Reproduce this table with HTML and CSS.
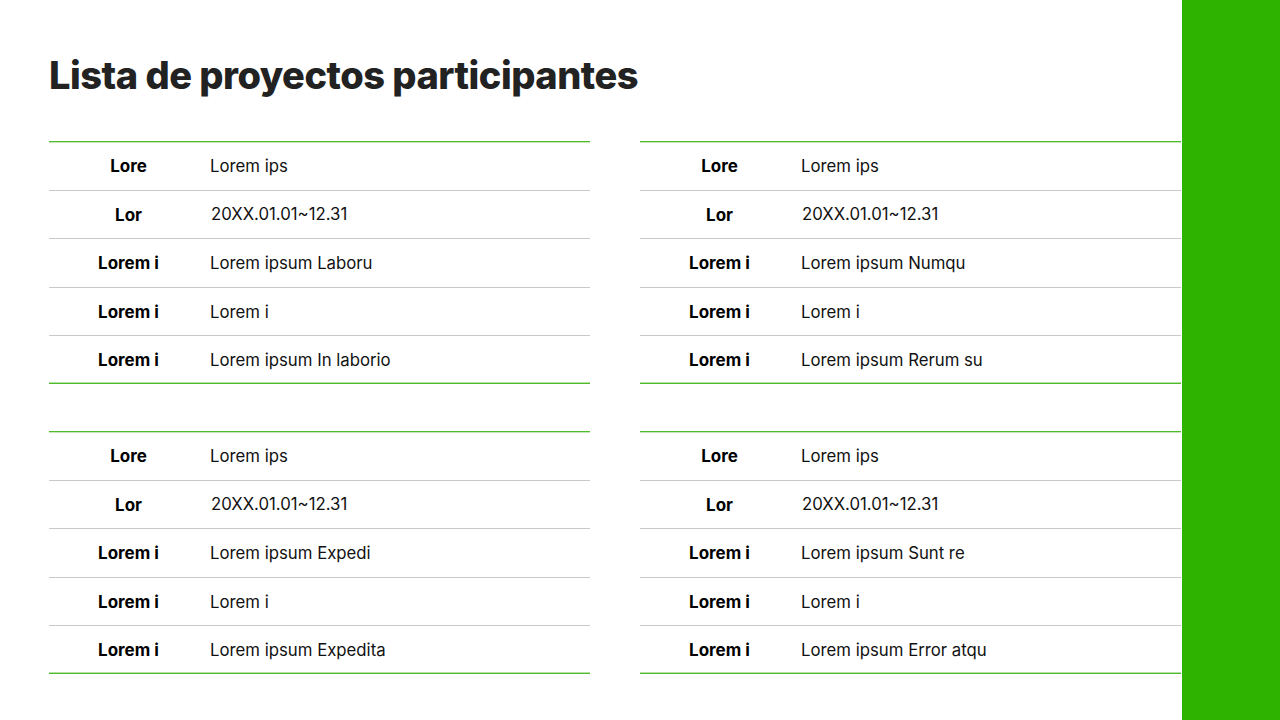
FILE: index.html
```html
<!DOCTYPE html>
<html lang="es">
<head>
<meta charset="utf-8">
<link rel="stylesheet" href="styles.css">
</head>
<body>
<div class="page">
  <main class="content">
    <h1 class="title">Lista de proyectos participantes</h1>
    <div class="grid">
      <div class="tbl">
        <div class="row"><div class="k">Lore</div><div class="v">Lorem ips</div></div>
        <div class="row"><div class="k">Lor</div><div class="v date">20XX.01.01~12.31</div></div>
        <div class="row"><div class="k">Lorem i</div><div class="v">Lorem ipsum Laboru</div></div>
        <div class="row"><div class="k">Lorem i</div><div class="v">Lorem i</div></div>
        <div class="row"><div class="k">Lorem i</div><div class="v">Lorem ipsum In laborio</div></div>
      </div>
      <div class="tbl">
        <div class="row"><div class="k">Lore</div><div class="v">Lorem ips</div></div>
        <div class="row"><div class="k">Lor</div><div class="v date">20XX.01.01~12.31</div></div>
        <div class="row"><div class="k">Lorem i</div><div class="v">Lorem ipsum Numqu</div></div>
        <div class="row"><div class="k">Lorem i</div><div class="v">Lorem i</div></div>
        <div class="row"><div class="k">Lorem i</div><div class="v">Lorem ipsum Rerum su</div></div>
      </div>
      <div class="tbl">
        <div class="row"><div class="k">Lore</div><div class="v">Lorem ips</div></div>
        <div class="row"><div class="k">Lor</div><div class="v date">20XX.01.01~12.31</div></div>
        <div class="row"><div class="k">Lorem i</div><div class="v">Lorem ipsum Expedi</div></div>
        <div class="row"><div class="k">Lorem i</div><div class="v">Lorem i</div></div>
        <div class="row"><div class="k">Lorem i</div><div class="v">Lorem ipsum Expedita</div></div>
      </div>
      <div class="tbl">
        <div class="row"><div class="k">Lore</div><div class="v">Lorem ips</div></div>
        <div class="row"><div class="k">Lor</div><div class="v date">20XX.01.01~12.31</div></div>
        <div class="row"><div class="k">Lorem i</div><div class="v">Lorem ipsum Sunt re</div></div>
        <div class="row"><div class="k">Lorem i</div><div class="v">Lorem i</div></div>
        <div class="row"><div class="k">Lorem i</div><div class="v">Lorem ipsum Error atqu</div></div>
      </div>
    </div>
  </main>
  <aside class="bar"></aside>
</div>
</body>
</html>
```

FILE: styles.css
```css
html, body {
  margin: 0;
  padding: 0;
  background: #ffffff;
}
body {
  font-family: Inter, "Noto Sans", sans-serif;
  color: #111111;
}
.page {
  display: flex;
  width: 1280px;
  height: 720px;
  overflow: hidden;
}
.content {
  flex: 1;
  padding: 52px 0 0 49px;
}
.bar {
  width: 98px;
  background: #2db300;
}
.title {
  margin: 0 0 43px 0;
  font-size: 38px;
  line-height: 46px;
  font-weight: 800;
  color: #222222;
  letter-spacing: -0.5px;
}
.grid {
  display: grid;
  grid-template-columns: 541px 541px;
  grid-template-rows: 242px 242px;
  column-gap: 50px;
  row-gap: 48px;
}
.tbl {
  display: grid;
  grid-template-rows: 49px 48px 49px 48px 48px;
  border-top: 1px solid #4fba2c;
}
.row {
  display: flex;
  align-items: center;
  border-bottom: 1px solid #c9c9c9;
}
.row:first-child {
  box-shadow: inset 0 1px 0 #c4e8b6;
}
.row:last-child {
  border-bottom-color: #4fba2c;
  box-shadow: inset 0 -1px 0 #b4e2a2;
}
.k {
  width: 159px;
  text-align: center;
  font-weight: 700;
  font-size: 17px;
  color: #000;
}
.v {
  padding-left: 2px;
  font-size: 16.75px;
  color: #111;
}
.date {
  padding-left: 3px;
  margin-top: -2px;
}
```
